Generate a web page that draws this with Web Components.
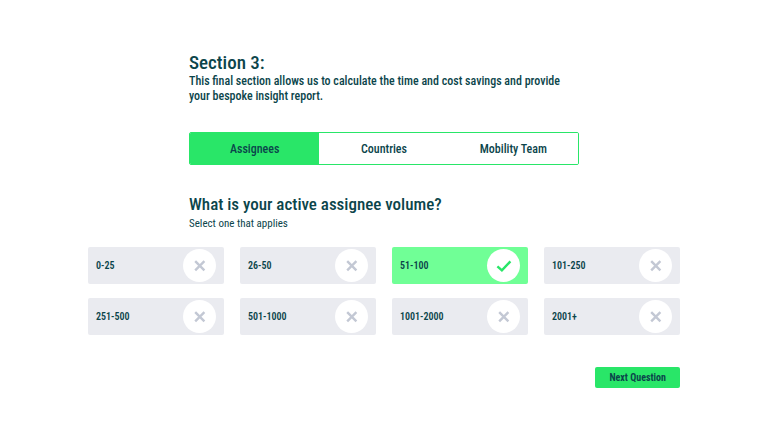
<!DOCTYPE html>
<html lang="en">
<head>
<meta charset="utf-8">
<meta name="viewport" content="width=device-width, initial-scale=1">
<title>Section 3</title>
<style>
  body {
    margin: 0;
    background: #fff;
    color: #0b454b;
    font-family: "Roboto Condensed", Roboto, "Liberation Sans", sans-serif;
    --green: #29e668;
    --light-green: #70ff96;
    --grey: #eaebf0;
    --cross: #c3c8d4;
  }
</style>
</head>
<body>
<survey-page>
  <section-intro slot="intro">
    <span slot="title">Section 3:</span>
    This final section allows us to calculate the time and cost savings and provide your bespoke insight report.
  </section-intro>
  <step-tabs slot="intro" steps="Assignees,Countries,Mobility Team" current="Assignees"></step-tabs>
  <question-heading slot="intro">
    <span slot="title">What is your active assignee volume?</span>
    Select one that applies
  </question-heading>
  <answer-group label="Active assignee volume" options="0-25,26-50,51-100,101-250,251-500,501-1000,1001-2000,2001+" value="51-100"></answer-group>
  <action-button slot="actions">Next Question</action-button>
</survey-page>

<script>
  const define = (name, render) => customElements.define(name, class extends HTMLElement {
    constructor() {
      super();
      this.attachShadow({ mode: "open" });
    }
    connectedCallback() {
      this.shadowRoot.innerHTML = "<style>*{box-sizing:border-box}</style>" + render(this);
      if (name === "step-tabs") {
        const buttons = [...this.shadowRoot.querySelectorAll("button")];
        buttons.forEach(button => button.addEventListener("click", () =>
          buttons.forEach(b => b.setAttribute("aria-selected", String(b === button)))));
      }
    }
  });

  define("survey-page", () => `
    <style>
      :host { display: block; padding: 52px 16px 48px; }
      .intro { max-width: 390px; margin: 0 auto; }
      .answers { max-width: 592px; margin: 15px auto 0; }
      .actions { display: flex; justify-content: flex-end; margin-top: 32px; }
    </style>
    <main>
      <div class="intro"><slot name="intro"></slot></div>
      <div class="answers">
        <slot></slot>
        <div class="actions"><slot name="actions"></slot></div>
      </div>
    </main>`);

  define("section-intro", () => `
    <style>
      :host { display: block; }
      h1 { margin: 0; font-size: 19px; line-height: 22px; font-weight: 500; }
      p { margin: 0; font-size: 12px; line-height: 15px; font-weight: 500; }
    </style>
    <h1><slot name="title"></slot></h1>
    <p><slot></slot></p>`);

  define("step-tabs", el => `
    <style>
      :host { display: block; margin-top: 28px; }
      .bar {
        display: grid; grid-template-columns: repeat(3, 1fr); overflow: hidden;
        height: 33px; border: 1px solid var(--green); border-radius: 2px;
      }
      button {
        border: 0; padding: 0; background: #fff; color: inherit;
        font: inherit; font-weight: 500; font-size: 12px; line-height: 16px; cursor: pointer;
      }
      button[aria-selected="true"] { background: var(--green); }
    </style>
    <div class="bar" role="tablist">
      ${el.getAttribute("steps").split(",").map(s =>
        `<button type="button" role="tab" aria-selected="${s === el.getAttribute("current")}">${s}</button>`).join("")}
    </div>`);

  define("question-heading", () => `
    <style>
      :host { display: block; margin-top: 29px; }
      h2 { margin: 0; font-size: 17px; line-height: 20px; font-weight: 500; }
      p { margin: 2px 0 0; font-size: 11px; line-height: 16px; }
    </style>
    <h2><slot name="title"></slot></h2>
    <p><slot></slot></p>`);

  define("answer-group", el => `
    <style>
      :host { display: block; }
      fieldset {
        display: grid; grid-template-columns: repeat(auto-fit, minmax(128px, 1fr));
        gap: 14px 16px; margin: 0; padding: 0; border: 0; min-width: 0;
      }
      label {
        display: flex; align-items: center; justify-content: space-between;
        height: 37px; padding: 0 8px; border-radius: 2px; background: var(--grey);
        font-size: 10px; line-height: 16px; font-weight: 600; cursor: pointer;
      }
      input {
        appearance: none; position: absolute; width: 1px; height: 1px; margin: 0; opacity: 0;
      }
      .mark {
        display: grid; place-items: center; width: 33px; height: 33px;
        border-radius: 50%; background: #fff;
      }
      svg { width: 16px; height: 16px; fill: none; }
      .cross { stroke: var(--cross); stroke-width: 2.4; }
      .check { stroke: var(--green); stroke-width: 2.4; display: none; }
      label:has(:checked) { background: var(--light-green); }
      label:has(:checked) .cross { display: none; }
      label:has(:checked) .check { display: block; }
      label:has(:focus-visible) { outline: 2px solid currentColor; }
    </style>
    <fieldset aria-label="${el.getAttribute("label")}">
      ${el.getAttribute("options").split(",").map(o => `
        <label>
          <input type="radio" name="answer" value="${o}" ${o === el.getAttribute("value") ? "checked" : ""}>
          <span>${o}</span>
          <span class="mark">
            <svg class="cross" viewBox="0 0 16 16" aria-hidden="true"><path d="M3.2 3.2 12.4 12.4M12.4 3.2 3.2 12.4"/></svg>
            <svg class="check" viewBox="0 0 16 16" aria-hidden="true"><path d="M1.4 8.4 5.9 12.4 14.4 3.4"/></svg>
          </span>
        </label>`).join("")}
    </fieldset>`);

  define("action-button", () => `
    <style>
      :host { display: block; }
      button {
        display: block; height: 21px; padding: 0 14px; border: 0; border-radius: 2px;
        background: var(--green); color: inherit; cursor: pointer;
        font: inherit; font-weight: 700; font-size: 10px; line-height: 16px;
      }
    </style>
    <button type="button"><slot></slot></button>`);
</script>
</body>
</html>
